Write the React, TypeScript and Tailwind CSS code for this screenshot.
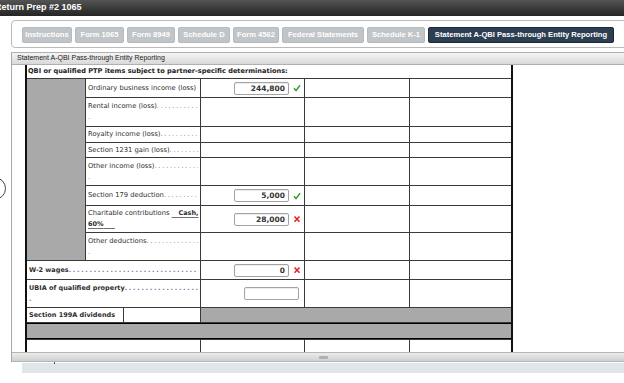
import { FC, ReactNode } from "react"

const tabs: [string, string][] = [
  ["Instructions", "w-[50px]"],
  ["Form 1065", "w-[49px]"],
  ["Form 8949", "w-[48px]"],
  ["Schedule D", "w-[52px]"],
  ["Form 4562", "w-[46px]"],
  ["Federal Statements", "w-[82px]"],
  ["Schedule K-1", "w-[58px]"],
]

const Dots: FC = () => (
  <span className="flex-1 overflow-hidden whitespace-nowrap tracking-[1.7px] text-[#7c6f9e]">{".".repeat(60)}</span>
)

const Line: FC<{ children?: ReactNode, dots?: boolean }> = ({ children, dots }) => (
  <div className="flex whitespace-nowrap">
    <span>{children}</span>
    {dots && <Dots />}
  </div>
)

const Tail: FC = () => (
  <div className="whitespace-nowrap text-[#7c6f9e]">.</div>
)

const Check: FC = () => (
  <svg width="8" height="8" viewBox="0 0 8 8">
    <path d="M1 4.3 L3 6.6 L7 1.2" fill="none" stroke="#3a9a2c" strokeWidth="1.5" />
  </svg>
)

const Cross: FC = () => (
  <svg width="8" height="8" viewBox="0 0 8 8">
    <path d="M1.5 1.5 L6.5 6.8 M6.5 1.5 L1.5 6.8" fill="none" stroke="#e52222" strokeWidth="1.6" />
  </svg>
)

const Amount: FC<{ value: string, mark?: "ok" | "bad" }> = ({ value, mark }) => (
  <div className={mark ? "bg-white flex items-center justify-end pr-[3px] gap-[4px]" : "bg-white flex items-center justify-end pr-[5px]"}>
    <div className="w-[55px] h-[13px] border border-[#a3a3a3] rounded-[2px] shadow-[inset_0_1px_1px_rgba(0,0,0,0.08)] text-right pr-[3px] font-bold text-[7.5px] leading-[11px] text-[#333]">
      {value}
    </div>
    {mark === "ok" && <Check />}
    {mark === "bad" && <Cross />}
  </div>
)

const label = "bg-white px-[2px] flex flex-col justify-center"
const boldLabel = "col-span-2 bg-white px-[2px] flex flex-col justify-center font-bold text-[6.5px]"
const blank = "bg-white"
const nb = (n: number) => "\u00a0".repeat(n)

export default function App() {
  return (
    <div className="w-[624px] h-[383px] overflow-hidden bg-white relative font-['Liberation_Sans',Arial,sans-serif]">
      <div className="h-[16px] bg-linear-to-b from-[#545454] to-[#252525] flex items-center">
        <span className="ml-[-5px] text-white font-bold text-[9px]">Return Prep #2 1065</span>
      </div>

      <div className="ml-[11px] mt-[4px] w-[640px] h-[28px] border border-[#b9b9b9] rounded-[4px] flex items-start pl-[10px] pt-[6px] gap-[3px]">
        {tabs.map(([t, w]) => (
          <div key={t} className={`${w} h-[16px] flex items-center justify-center whitespace-nowrap bg-[#bfc5c9] border border-[#b4babe] rounded-[2px] text-white font-bold text-[7.6px]`}>
            {t}
          </div>
        ))}
        <div className="w-[186px] h-[16px] flex items-center justify-center whitespace-nowrap bg-[#2c3e51] border border-[#1c2a38] rounded-[2px] text-white font-bold text-[7.6px]">
          Statement A-QBI Pass-through Entity Reporting
        </div>
      </div>

      <div className="ml-[11px] mt-[4px] w-[640px] border-l border-[#aaaaaa]">
        <div className="h-[13px] border-y border-[#b0b0b0] bg-linear-to-b from-[#f4f4f4] to-[#d9d9d9] flex items-center pl-[5px] text-[7px] text-[#222]">
          Statement A-QBI Pass-through Entity Reporting
        </div>

        <div className="h-[287px] overflow-hidden">
          <div className="ml-[13px] mt-[-5px] w-[488px] border-2 border-[#111] bg-[#3a3a3a] grid gap-px grid-cols-[58px_114px_103px_104px_101px] grid-rows-[16px_18px_28px_15px_14px_27px_19px_26px_27px_18px_27px_14px_16px_40px] font-['DejaVu_Sans',Verdana,sans-serif] text-[6.75px] leading-[11px] text-[#2e2e2e]">
            <div className="col-span-5 bg-white flex items-end pb-[1px] px-[1px] font-bold text-[6.6px] text-[#222] whitespace-nowrap">
              QBI or qualified PTP items subject to partner-specific determinations:
            </div>

            <div className="row-span-8 bg-[#a9a9a9]" />
            <div className={label}><Line>Ordinary business income (loss)</Line></div>
            <Amount value="244,800" mark="ok" />
            <div className={blank} />
            <div className={blank} />

            <div className={label}><Line dots>Rental income (loss) </Line><Tail /></div>
            <div className={blank} /><div className={blank} /><div className={blank} />

            <div className={label}><Line dots>Royalty income (loss) </Line></div>
            <div className={blank} /><div className={blank} /><div className={blank} />

            <div className={label}><Line dots>Section 1231 gain (loss) </Line></div>
            <div className={blank} /><div className={blank} /><div className={blank} />

            <div className={label}><Line dots>Other income (loss)</Line><Tail /></div>
            <div className={blank} /><div className={blank} /><div className={blank} />

            <div className={label}><Line dots>Section 179 deduction</Line></div>
            <Amount value="5,000" mark="ok" />
            <div className={blank} /><div className={blank} />

            <div className={label}>
              <div className="whitespace-nowrap">
                Charitable contributions{" "}
                <span className="font-bold text-[6.5px] underline decoration-[#6f6f6f] underline-offset-[1.5px]">{nb(3)}Cash,</span>
              </div>
              <div className="whitespace-nowrap">
                <span className="font-bold text-[6.5px] underline decoration-[#6f6f6f] underline-offset-[1.5px]">60%{nb(5)}</span>
              </div>
            </div>
            <Amount value="28,000" mark="bad" />
            <div className={blank} /><div className={blank} />

            <div className={label}><Line dots>Other deductions</Line><Tail /></div>
            <div className={blank} /><div className={blank} /><div className={blank} />

            <div className={boldLabel}><Line dots>W-2 wages </Line></div>
            <Amount value="0" mark="bad" />
            <div className={blank} /><div className={blank} />

            <div className={boldLabel}>
              <Line dots>UBIA of qualified property</Line>
              <Tail />
            </div>
            <Amount value="" />
            <div className={blank} /><div className={blank} />

            <div className="col-span-2 bg-white flex">
              <div className="w-[97px] px-[2px] flex items-center font-bold text-[6.5px] whitespace-nowrap border-r border-[#3a3a3a]">Section 199A dividends</div>
              <div className="flex-1" />
            </div>
            <div className="col-span-3 bg-[#a9a9a9]" />

            <div className="col-span-5 bg-[#a9a9a9] border-y border-black" />

            <div className="col-span-2 bg-white" />
            <div className={blank} /><div className={blank} /><div className={blank} />
          </div>
        </div>

        <div className="h-[10px] border-y border-[#b5b5b5] bg-linear-to-b from-[#ececec] to-[#d0d0d0] flex justify-center items-center">
          <div className="ml-[-17px] w-[9px] h-[3px] bg-[#b0b0b0] rounded-[1px]" />
        </div>
      </div>

      <div className="ml-[22px] mt-[1px] h-[10px] bg-[#dfe6e9]" />

      <div className="absolute left-[54px] top-[362px] w-px h-[2px] bg-[#555]" />
      <div className="absolute left-[-17px] top-[177px] w-[23px] h-[23px] rounded-full border-[1.5px] border-[#444]" />
    </div>
  )
}
